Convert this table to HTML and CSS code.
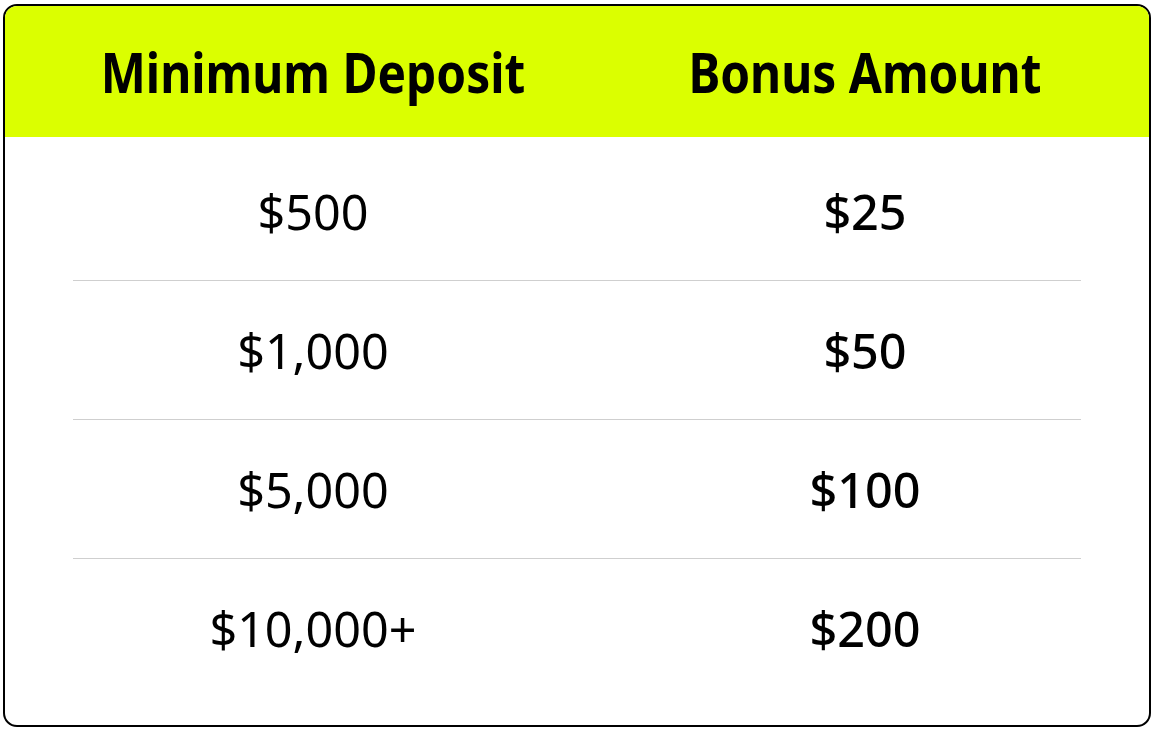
FILE: index.html
```html
<!DOCTYPE html>
<html>
<head>
<meta charset="utf-8">
<link rel="stylesheet" href="styles.css">
</head>
<body>
<div class="card">
  <div class="head">
    <div class="cell"><span class="title">Minimum Deposit</span></div>
    <div class="cell"><span class="title">Bonus Amount</span></div>
  </div>
  <div class="body">
    <div class="row"><div class="cells"><div class="cell">$500</div><div class="cell val">$25</div></div></div>
    <div class="row"><div class="cells"><div class="cell">$1,000</div><div class="cell val">$50</div></div></div>
    <div class="row"><div class="cells"><div class="cell">$5,000</div><div class="cell val">$100</div></div></div>
    <div class="row last"><div class="cells"><div class="cell">$10,000+</div><div class="cell val">$200</div></div></div>
  </div>
</div>
</body>
</html>
```
FILE: styles.css
```css
html, body { margin: 0; padding: 0; background: #fff; }
body { font-family: "Noto Sans", "Open Sans", sans-serif; color: #000; }
.card {
  margin: 4px 0 0 3px;
  width: 1144px;
  height: 719px;
  border: 2px solid #000;
  border-radius: 14px;
  overflow: hidden;
  display: flex;
  flex-direction: column;
}
.head {
  background: #dbff00;
  height: 131px;
  display: grid;
  grid-template-columns: 1fr 1fr;
  align-items: center;
  padding: 0 8px 0 32px;
  font-weight: 700;
  font-size: 55px;
}
.title {
  display: inline-block;
  transform: scaleX(0.87);
}
.cell { text-align: center; }
.body { padding-top: 5px; }
.row::after {
  content: "";
  display: block;
  margin: 0 68px 0 68px;
  border-top: 1px solid #cfcfcf;
}
.row.last::after { display: none; }
.cells {
  height: 138px;
  display: grid;
  grid-template-columns: 1fr 1fr;
  align-items: center;
  padding: 0 8px 0 32px;
  font-size: 48.5px;
}
.val { font-weight: 500; }
```
